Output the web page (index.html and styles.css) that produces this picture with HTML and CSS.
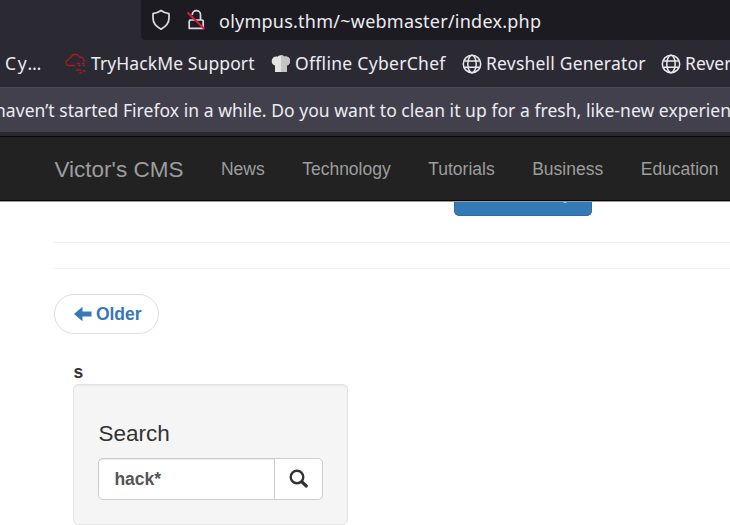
FILE: index.html
```html
<!DOCTYPE html>
<html lang="en">
<head>
<meta charset="utf-8">
<title>Victor's CMS</title>
<link rel="stylesheet" href="styles.css">
</head>
<body>
<header class="browser">
  <div class="address">
    <svg class="shield" width="20" height="22" viewBox="0 0 20 22"><path d="M10 1.500c2.500 1.800 5 2.700 8 3.200V9c0 4.800-3 8.500-8 11.200C5 17.500 2 13.800 2 9V4.700c3-.5 5.500-1.400 8-3.200Z"/></svg>
    <svg class="lock" width="20" height="22" viewBox="0 0 20 22"><path d="M6.300 6V5.800a4.100 4.100 0 0 1 8.200 0V11"/><path d="M4 11h12a1.200 1.200 0 0 1 1.200 1.200v7.100H3.200V12.200Z"/><path class="slash" d="m1.500 3.500 17 16.500"/></svg>
    <span class="url">olympus.thm/~webmaster/index.php</span>
  </div>
  <nav class="bookmarks">
    <span class="mark cy">Cy…</span>
    <svg class="cloud" width="22" height="22" viewBox="0 0 22 22"><path d="M10 12.500H4a2.800 2.800 0 0 1-.5-5.600A3 3 0 0 1 6 4.300a4.500 4.500 0 0 1 8.500 0 3.800 3.800 0 0 1 4.500 4.500M12 10.500h3m2 0h2.500M13.500 12.500h2m2.500 0h2M11 17h5m1.500 1h3M14.500 20h2.500"/></svg>
    <span class="mark support">TryHackMe Support</span>
    <svg class="hat" width="20" height="20" viewBox="0 0 20 20"><path fill="#e4e4e4" d="M4 18v-6.500C1 10.500 0 7.500 1.200 5 2.500 2.500 5 2 6.500 2.800 8 .8 12 .8 13.500 2.800c2-.8 4.500 0 5.200 2.200 1 2.500 0 5.500-2.700 6.500V18Z"/><path fill="#c4c4c4" d="M10 1.300c1.500 0 2.700.5 3.500 1.500 2-.8 4.500 0 5.200 2.200 1 2.500 0 5.500-2.700 6.500V18H10Z"/></svg>
    <span class="mark chef">Offline CyberChef</span>
    <svg class="globe" width="20" height="20" viewBox="0 0 20 20"><circle cx="10" cy="10" r="8.700"/><ellipse cx="10" cy="10" rx="4.200" ry="8.700"/><path d="M2.500 7h15m-15 6.200h15"/></svg>
    <span class="mark revshell">Revshell Generator</span>
    <svg class="globe" width="20" height="20" viewBox="0 0 20 20"><circle cx="10" cy="10" r="8.700"/><ellipse cx="10" cy="10" rx="4.200" ry="8.700"/><path d="M2.500 7h15m-15 6.200h15"/></svg>
    <span class="mark">Rever</span>
  </nav>
  <div class="notice"><span>haven’t started Firefox in a while. Do you want to clean it up for a fresh, like-new experien</span></div>
</header>
<nav class="navbar">
  <a class="brand">Victor's CMS</a>
  <a>News</a><a>Technology</a><a>Tutorials</a><a>Business</a><a>Education</a>
</nav>
<main>
  <div class="more"><span></span></div>
  <hr class="first">
  <hr class="second">
  <a class="older"><svg width="18" height="16" viewBox="0 0 18 16"><path d="M0 8 8.500.800V5.500H17.500v5H8.500v4.700Z"/></svg>Older</a>
  <aside>
    <b class="label">s</b>
    <section class="well">
      <h4>Search</h4>
      <div class="group">
        <div class="field">hack*</div>
        <div class="submit"><svg width="20" height="20" viewBox="0 0 20 20"><circle cx="8" cy="8" r="6.300"/><path class="handle" d="m13 13 4.300 4"/></svg></div>
      </div>
    </section>
  </aside>
</main>
</body>
</html>
```

FILE: styles.css
```css
* { box-sizing: border-box; }
body { margin: 0; width: 730px; height: 525px; overflow: hidden; background: #fff; font: 17.5px/25px "Liberation Sans", Arial, sans-serif; color: #333; }
svg { display: block; flex: none; fill: none; }
.browser { height: 136px; background: #2b2a33; color: #ececf0; font-family: "Noto Sans", sans-serif; overflow: hidden; white-space: nowrap; }
.address { height: 40px; margin-left: 141px; padding-left: 10px; display: flex; align-items: center; background: #1c1b22; border-radius: 0 0 0 4px; }
.address svg { stroke: #dcdce0; stroke-width: 1.7; stroke-linejoin: round; }
.lock { margin-left: 15px; }
.address .slash { stroke: #e3163f; stroke-width: 2; }
.url { margin: 2px 0 0 13px; font-size: 18px; letter-spacing: 0.24px; }
.bookmarks { height: 47px; padding-left: 5px; display: flex; align-items: center; font-size: 17.5px; }
.mark { flex: none; }
.cy { width: 60px; letter-spacing: 1.6px; }
.cloud { stroke: #a81c22; stroke-width: 1.3; }
.support { width: 180px; margin-left: 4px; letter-spacing: 0.1px; }
.chef { width: 162px; margin-left: 4px; letter-spacing: 0.3px; }
.hat { margin-top: 1px; }
.chef + .globe { margin-left: 5px; }
.globe { stroke: #eaeaee; stroke-width: 1.5; margin-right: 4px; }
.revshell { width: 175px; letter-spacing: 0.2px; }
.notice { height: 45px; display: flex; align-items: center; background: #42404d; border-top: 1px solid #4b4957; }
.notice span { margin-left: -5px; letter-spacing: 0.045px; }
.navbar { height: 65px; display: flex; align-items: center; gap: 37.5px; padding: 2px 0 0 54.5px; background: #222; border-top: 1px solid #080808; border-bottom: 1px solid #080808; color: #9d9d9d; white-space: nowrap; }
.brand { font-size: 22.5px; }
main { height: 324px; padding-left: 54.4px; border-top: 1px solid #999; }
.more { height: 40px; }
.more span { display: block; width: 138px; height: 14px; margin-left: 400px; background: radial-gradient(ellipse 2px 1px at 110px 0, #b5cfe5 70%, transparent) #337ab7; border: 1px solid #2e6da4; border-top: 0; border-radius: 0 0 5px 5px; }
hr { margin: 0; border: 0; height: 1px; background: #eee; }
.second { margin-top: 25px; }
.older { display: flex; align-items: center; gap: 4px; width: 105px; height: 40px; margin-top: 25px; padding-left: 18.5px; border: 1px solid #ddd; border-radius: 20px; color: #337ab7; font-weight: bold; }
.older svg { fill: #337ab7; }
aside { width: 275px; margin: 25px 0 0 19px; }
.label { display: block; padding-top: 1px; margin-bottom: -1px; }
.well { height: 141px; padding: 36px 24px 0; background: #f5f5f5; border: 1px solid #e3e3e3; border-radius: 5px; box-shadow: inset 0 1px 1px rgba(0,0,0,.05); }
h4 { margin: 0; font-size: 22.5px; font-weight: normal; line-height: 25px; }
.group { display: flex; width: 225px; height: 42px; margin-top: 12px; background: #fff; border: 1px solid #ccc; border-radius: 5px; }
.field { width: 175px; padding: 8px 0 0 15px; font-weight: bold; color: #555; box-shadow: inset 0 1px 1px rgba(0,0,0,.075); }
.submit { flex: 1; padding: 10px 0 0 14px; border-left: 1px solid #ccc; }
.submit svg { stroke: #333; stroke-width: 2.4; }
.submit .handle { stroke-width: 3.2; stroke-linecap: round; }
```
